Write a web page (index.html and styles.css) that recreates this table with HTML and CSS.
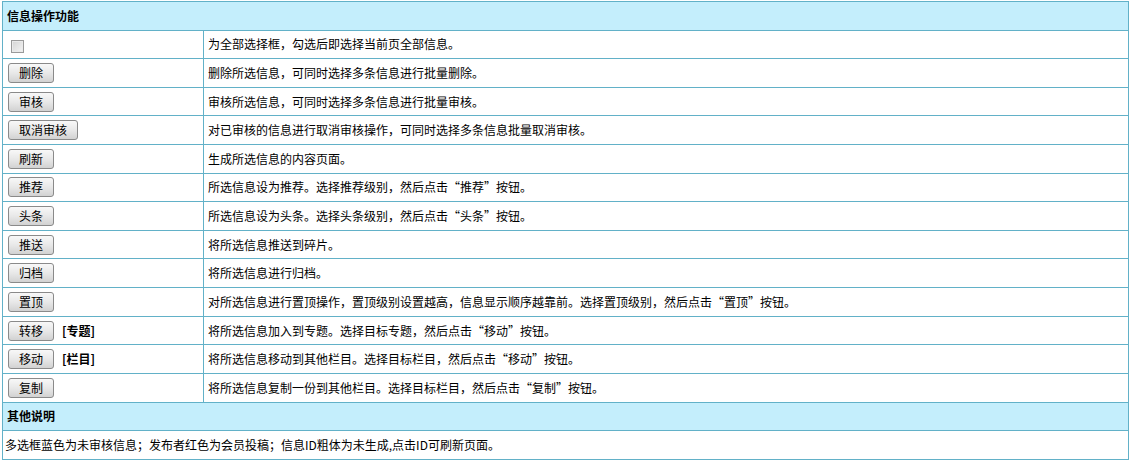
FILE: index.html
```html
<!DOCTYPE html>
<html lang="zh-CN">
<head>
<meta charset="utf-8">
<title>信息操作功能</title>
<link rel="stylesheet" href="styles.css">
</head>
<body>
<table class="tableborder">
  <tr class="header"><td colspan="2">信息操作功能</td></tr>
  <tr><td class="op"><input type="checkbox" class="chk"></td><td class="desc">为全部选择框，勾选后即选择当前页全部信息。</td></tr>
  <tr><td class="op"><button class="btn">删除</button></td><td class="desc">删除所选信息，可同时选择多条信息进行批量删除。</td></tr>
  <tr><td class="op"><button class="btn">审核</button></td><td class="desc">审核所选信息，可同时选择多条信息进行批量审核。</td></tr>
  <tr><td class="op"><button class="btn">取消审核</button></td><td class="desc">对已审核的信息进行取消审核操作，可同时选择多条信息批量取消审核。</td></tr>
  <tr><td class="op"><button class="btn">刷新</button></td><td class="desc">生成所选信息的内容页面。</td></tr>
  <tr><td class="op"><button class="btn">推荐</button></td><td class="desc">所选信息设为推荐。选择推荐级别，然后点击“推荐”按钮。</td></tr>
  <tr><td class="op"><button class="btn">头条</button></td><td class="desc">所选信息设为头条。选择头条级别，然后点击“头条”按钮。</td></tr>
  <tr><td class="op"><button class="btn">推送</button></td><td class="desc">将所选信息推送到碎片。</td></tr>
  <tr><td class="op"><button class="btn">归档</button></td><td class="desc">将所选信息进行归档。</td></tr>
  <tr><td class="op"><button class="btn">置顶</button></td><td class="desc">对所选信息进行置顶操作，置顶级别设置越高，信息显示顺序越靠前。选择置顶级别，然后点击“置顶”按钮。</td></tr>
  <tr><td class="op"><button class="btn">转移</button><b class="tag">[专题]</b></td><td class="desc">将所选信息加入到专题。选择目标专题，然后点击“移动”按钮。</td></tr>
  <tr><td class="op"><button class="btn">移动</button><b class="tag">[栏目]</b></td><td class="desc">将所选信息移动到其他栏目。选择目标栏目，然后点击“移动”按钮。</td></tr>
  <tr><td class="op"><button class="btn">复制</button></td><td class="desc">将所选信息复制一份到其他栏目。选择目标栏目，然后点击“复制”按钮。</td></tr>
  <tr class="header"><td colspan="2">其他说明</td></tr>
  <tr><td colspan="2" class="note">多选框蓝色为未审核信息；发布者红色为会员投稿；信息ID粗体为未生成,点击ID可刷新页面。</td></tr>
</table>
</body>
</html>
```

FILE: styles.css
```css
html, body {
  margin: 0;
  padding: 0;
  background: #ffffff;
}
body {
  padding: 1px 3px 0 2px;
  font-family: "Noto Sans CJK SC", "Liberation Sans", sans-serif;
  font-size: 12px;
  color: #000;
}
.tableborder {
  width: 100%;
  border-collapse: collapse;
  border: 1px solid #62b1c8;
}
.tableborder td {
  border: 1px solid #62b1c8;
  padding: 0 4px;
  height: 27.62px;
  line-height: 16px;
  vertical-align: middle;
  white-space: nowrap;
}
.header td {
  background: #c4eefc;
  font-weight: bold;
  padding-left: 4px;
}
.op {
  width: 192px;
}
.desc {
  padding-left: 3px;
}
td.note {
  padding-left: 2px;
}
.chk {
  appearance: none;
  -webkit-appearance: none;
  width: 13px;
  height: 13px;
  margin: 3px 0 0 4px;
  border: 1px solid #9a9a9a;
  background: linear-gradient(135deg, #d4d4d4, #f4f4f4);
  box-shadow: inset 0 0 0 1px #eaeaea;
  vertical-align: middle;
}
.btn {
  font-family: "Noto Sans CJK SC", "Liberation Sans", sans-serif;
  font-size: 12px;
  height: 20px;
  line-height: 16px;
  padding: 0 10px;
  margin: 0 0 0 1px;
  border: 1px solid #8a8a8a;
  border-radius: 3px;
  background: linear-gradient(#f8f8f8, #e8e8e8 50%, #d2d2d2);
  color: #000;
  vertical-align: middle;
}
.tag {
  margin-left: 8px;
  font-weight: bold;
  vertical-align: middle;
}
```
